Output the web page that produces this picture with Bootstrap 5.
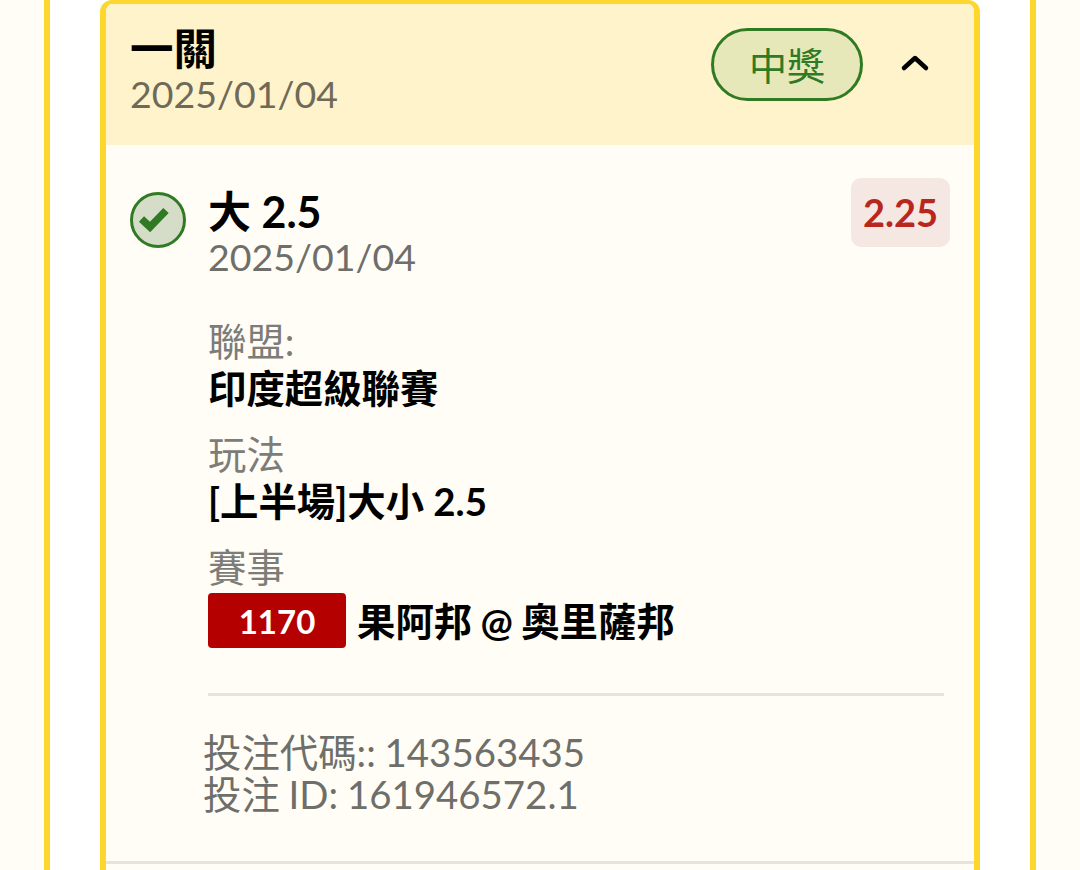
<!DOCTYPE html>
<html lang="zh-Hant">
<head>
<meta charset="utf-8">
<title>投注</title>
<link href="https://cdn.jsdelivr.net/npm/bootstrap@5.3.0/dist/css/bootstrap.min.css" rel="stylesheet">
<style>
html, body { height: 870px; overflow: hidden; }
body { background: #fffdf5; font-family: "Lato", "Noto Sans CJK TC", sans-serif; color: #000; padding: 0 44px; }
.frame-outer { background: #fff; border-left: 6px solid #fdd72d; border-right: 6px solid #fdd72d; padding: 0 50px; height: 870px; }
.bet-card { background: #fffdf5; border: solid #fdd72d; border-width: 4px 6px 0; border-radius: 12px 12px 0 0; height: 870px; overflow: hidden; }
.bet-head { background: #fff3cc; height: 141px; padding: 19px 44px 0 24px; }
.head-title { font-size: 43.5px; font-weight: 700; line-height: 51px; }
.head-date { font-size: 37.5px; line-height: 40px; color: #6f6a58; }
.won-pill { width: 152px; height: 73px; margin-top: 5px; margin-right: 37px; border: 3px solid #2f7a22; border-radius: 37px; background: #e6e8ba; color: #2f7a22; font-size: 38px; line-height: 1; }
.chev { width: 30px; height: 20px; margin-top: 30px; }
.bet-main { padding: 33px 24px 0 24px; height: 719px; border-bottom: 3px solid #e6e4dc; }
.tick { width: 56px; height: 56px; flex: none; margin-top: 14px; margin-right: 22px; }
.sel-title { font-size: 43px; font-weight: 700; line-height: 50px; margin-top: 9px; }
.sel-date { font-size: 37.5px; line-height: 40px; color: #6e6e6a; }
.odds-tag { width: 99px; height: 69px; background: #f5e7e2; color: #b8261d; border-radius: 10px; font-size: 38px; font-weight: 700; }
.info-label { font-size: 38.4px; line-height: 46px; color: #7c7c78; }
.info-val { font-size: 38.4px; font-weight: 700; line-height: 48px; margin-bottom: 19px; }
.info-first { margin-top: 41px; }
.num-tag { width: 138px; height: 55px; background: #b50000; color: #fff; border-radius: 4px; font-size: 33px; font-weight: 700; margin-right: 11px; }
.team-row { margin-top: 3px; margin-bottom: 0; word-spacing: -1px; }
.rule { border-top: 3px solid #e6e4dc; margin: 45px 6px 0 0; }
.foot-ids { font-size: 38.4px; line-height: 42px; color: #6e6e6a; margin: 35px 0 0 -5px; word-spacing: -1px; }
</style>
</head>
<body>
<div class="frame-outer">
  <div class="bet-card">
    <div class="bet-head d-flex justify-content-between">
      <div>
        <div class="head-title">一關</div>
        <div class="head-date">2025/01/04</div>
      </div>
      <div class="d-flex align-items-start">
        <div class="won-pill d-flex align-items-center justify-content-center">中獎</div>
        <svg class="chev" viewBox="0 0 30 20" fill="none" stroke="#000" stroke-width="4.5" stroke-linecap="round" stroke-linejoin="round"><path d="M4 15 15 5 26 15"/></svg>
      </div>
    </div>
    <div class="bet-main d-flex">
      <svg class="tick" viewBox="0 0 56 56"><circle cx="28" cy="28" r="26.5" fill="#d5ddc9" stroke="#2f7a22" stroke-width="3"/><path d="M11.5 27 20 35 36 18.5" fill="none" stroke="#2f7a22" stroke-width="7.5"/></svg>
      <div class="flex-grow-1">
        <div class="d-flex justify-content-between">
          <div>
            <div class="sel-title">大 2.5</div>
            <div class="sel-date">2025/01/04</div>
          </div>
          <div class="odds-tag d-flex align-items-center justify-content-center">2.25</div>
        </div>
        <div class="info-label info-first">聯盟:</div>
        <div class="info-val">印度超級聯賽</div>
        <div class="info-label">玩法</div>
        <div class="info-val">[上半場]大小 2.5</div>
        <div class="info-label">賽事</div>
        <div class="d-flex align-items-center info-val team-row">
          <span class="num-tag d-flex align-items-center justify-content-center">1170</span>
          <span>果阿邦 @ 奧里薩邦</span>
        </div>
        <div class="rule"></div>
        <div class="foot-ids">投注代碼:: 143563435<br>投注 ID: 161946572.1</div>
      </div>
    </div>
  </div>
</div>
</body>
</html>
